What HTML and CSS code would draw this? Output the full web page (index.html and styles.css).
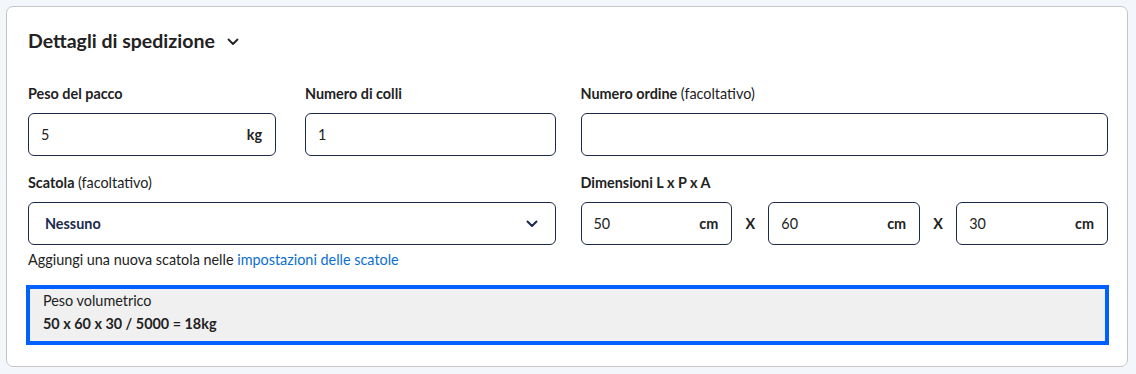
FILE: index.html
```html
<!DOCTYPE html>
<html lang="it">
<head>
<meta charset="utf-8">
<link rel="stylesheet" href="styles.css">
</head>
<body>
<section class="card">
  <h2 class="title">Dettagli di spedizione
    <svg class="chev" width="12" height="8" viewBox="0 0 12 8"><path d="M1.5 1.5 L6 6 L10.5 1.5" fill="none" stroke="#222" stroke-width="1.8" stroke-linecap="round" stroke-linejoin="round"/></svg>
  </h2>
  <div class="grid">
    <div class="half split">
      <div class="field">
        <label class="label">Peso del pacco</label>
        <div class="input"><span class="val">5</span><span class="unit">kg</span></div>
      </div>
      <div class="field">
        <label class="label">Numero di colli</label>
        <div class="input"><span class="val">1</span></div>
      </div>
    </div>
    <div class="field">
      <label class="label">Numero ordine <span class="opt">(facoltativo)</span></label>
      <div class="input"></div>
    </div>
    <div class="field">
      <label class="label">Scatola <span class="opt">(facoltativo)</span></label>
      <div class="input select"><span class="sel">Nessuno</span>
        <svg width="12" height="8" viewBox="0 0 12 8"><path d="M1.5 1.5 L6 6 L10.5 1.5" fill="none" stroke="#1b2a4e" stroke-width="2" stroke-linecap="round" stroke-linejoin="round"/></svg>
      </div>
      <p class="help">Aggiungi una nuova scatola nelle <a class="link">impostazioni delle scatole</a></p>
    </div>
    <div class="field">
      <label class="label">Dimensioni L x P x A</label>
      <div class="dims">
        <div class="input"><span class="val">50</span><span class="unit">cm</span></div>
        <span class="x">X</span>
        <div class="input"><span class="val">60</span><span class="unit">cm</span></div>
        <span class="x">X</span>
        <div class="input"><span class="val">30</span><span class="unit">cm</span></div>
      </div>
    </div>
  </div>
  <div class="vol">
    <div class="vol-label">Peso volumetrico</div>
    <div class="vol-value">50 x 60 x 30 / 5000 = 18kg</div>
  </div>
</section>
</body>
</html>
```
FILE: styles.css
```css
* { box-sizing: border-box; }
html, body { margin: 0; padding: 0; }
body {
  background: #f3f7fc;
  font-family: "Lato", "Open Sans", sans-serif;
  color: #222;
  font-size: 14.4px;
  padding: 6px 8px 0 6px;
}
.card {
  background: #fff;
  border: 1px solid #c6c6c6;
  border-radius: 7px;
  height: 361px;
  padding: 21px 19px 20px 21px;
}
.title {
  margin: 0;
  font-size: 19.5px;
  line-height: 26px;
  font-weight: 700;
  display: flex;
  align-items: center;
  gap: 12px;
}
.chev { margin-top: 2px; }
.grid {
  margin-top: 30px;
  display: grid;
  grid-template-columns: 1fr 1fr;
  column-gap: 25px;
  row-gap: 17px;
}
.split {
  display: grid;
  grid-template-columns: 248px 1fr;
  column-gap: 29px;
}
.field { display: flex; flex-direction: column; }
.label {
  font-weight: 700;
  line-height: 20px;
  margin-bottom: 9px;
}
.opt { font-weight: 400; }
.input {
  height: 43px;
  border: 1px solid #1c2a48;
  border-radius: 6px;
  display: flex;
  align-items: center;
  justify-content: space-between;
  padding: 0 13px 0 12px;
}
.unit { font-weight: 700; }
.select { padding: 0 17px 0 16px; }
.sel { font-weight: 700; color: #1b2a4e; }
.help { margin: 5px 0 0; line-height: 20px; }
.link { color: #0b6fd0; }
.dims { display: flex; align-items: center; }
.dims .input { flex: 1; }
.x { width: 36px; text-align: center; font-weight: 700; }
.vol {
  margin: 15px -1px 0 -2px;
  border: 4px solid #0060ff;
  background: #f0f0f0;
  padding: 1px 13px 5px;
}
.vol-label { line-height: 22px; }
.vol-value { line-height: 24px; font-weight: 700; }
```
